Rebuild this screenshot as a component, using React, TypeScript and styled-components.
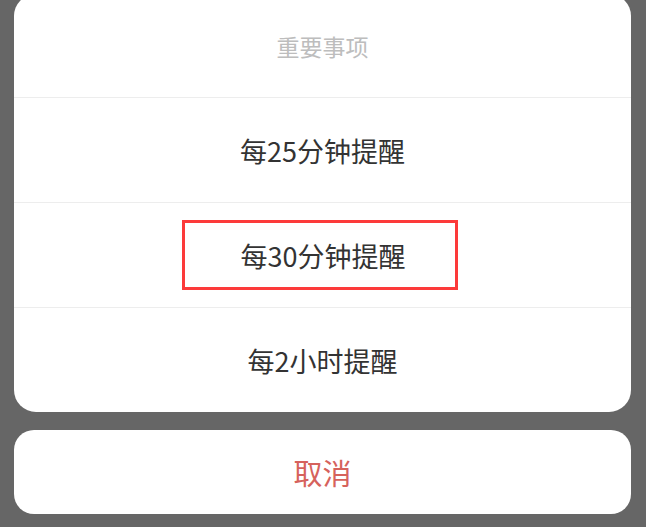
import styled, { createGlobalStyle } from "styled-components";

const GlobalStyle = createGlobalStyle`
  html, body {
    margin: 0;
    padding: 0;
    background: #666666;
    overflow: hidden;
  }
  body {
    font-family: "Noto Sans CJK SC", "Noto Sans", sans-serif;
  }
`;

const options = [
  { label: "每25分钟提醒", marked: false },
  { label: "每30分钟提醒", marked: true },
  { label: "每2小时提醒", marked: false },
];

const App = () => {
  return (
    <>
      <GlobalStyle />
      <Screen>
        <Sheet>
          <TitleRow>重要事项</TitleRow>
          {options.map((o) => (
            <OptionRow key={o.label}>
              {o.marked ? <Marked>{o.label}</Marked> : o.label}
            </OptionRow>
          ))}
        </Sheet>
        <CancelCard>取消</CancelCard>
      </Screen>
    </>
  );
};

export default App;

const Screen = styled.div`
  width: 646px;
  height: 527px;
  box-sizing: border-box;
  padding: 0 15px 0 14px;
  display: flex;
  flex-direction: column;
  gap: 18px;
  overflow: hidden;
`;

const Sheet = styled.div`
  margin-top: -6px;
  background: #ffffff;
  border-radius: 22px;
  display: flex;
  flex-direction: column;
  overflow: hidden;
`;

const TitleRow = styled.div`
  height: 103px;
  display: flex;
  align-items: center;
  justify-content: center;
  font-size: 23px;
  color: #bdbdbd;
`;

const OptionRow = styled.div`
  height: 104px;
  border-top: 1px solid #ededed;
  display: flex;
  align-items: center;
  justify-content: center;
  font-size: 27px;
  color: #333333;
`;

const Marked = styled.span`
  box-sizing: border-box;
  height: 70px;
  width: 276px;
  margin-right: 5px;
  border: 3px solid #fc3a3a;
  display: flex;
  align-items: center;
  justify-content: center;
  padding-left: 6px;
`;

const CancelCard = styled.div`
  height: 84px;
  background: #ffffff;
  border-radius: 20px;
  display: flex;
  align-items: center;
  justify-content: center;
  font-size: 29px;
  color: #d6625c;
`;
